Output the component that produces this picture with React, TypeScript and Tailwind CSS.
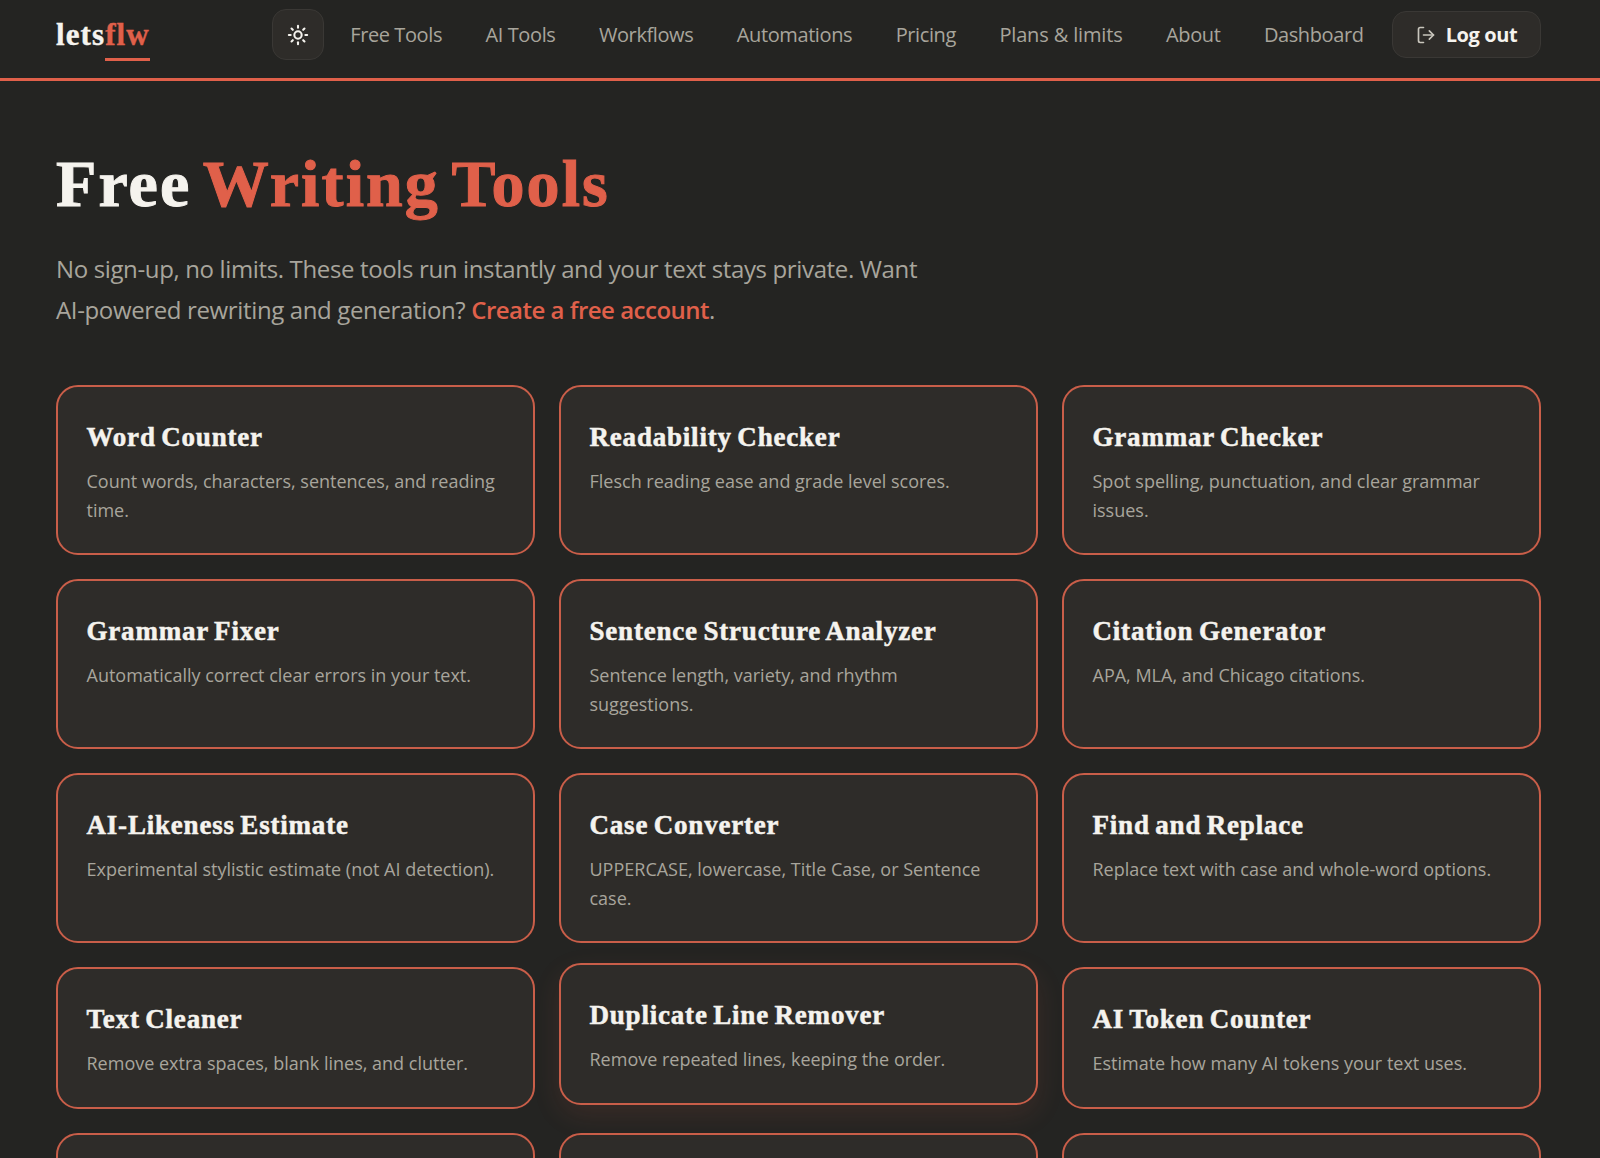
import { LogOut, Sun } from "lucide-react";

const NAV_LINKS = ["Free Tools", "AI Tools", "Workflows", "Automations", "Pricing", "Plans & limits", "About", "Dashboard"];

const TOOLS = [
  { title: "Word Counter", desc: "Count words, characters, sentences, and reading time." },
  { title: "Readability Checker", desc: "Flesch reading ease and grade level scores." },
  { title: "Grammar Checker", desc: "Spot spelling, punctuation, and clear grammar issues." },
  { title: "Grammar Fixer", desc: "Automatically correct clear errors in your text." },
  { title: "Sentence Structure Analyzer", desc: "Sentence length, variety, and rhythm suggestions." },
  { title: "Citation Generator", desc: "APA, MLA, and Chicago citations." },
  { title: "AI-Likeness Estimate", desc: "Experimental stylistic estimate (not AI detection)." },
  { title: "Case Converter", desc: "UPPERCASE, lowercase, Title Case, or Sentence case." },
  { title: "Find and Replace", desc: "Replace text with case and whole-word options." },
  { title: "Text Cleaner", desc: "Remove extra spaces, blank lines, and clutter." },
  { title: "Duplicate Line Remover", desc: "Remove repeated lines, keeping the order.", hovered: true },
  { title: "AI Token Counter", desc: "Estimate how many AI tokens your text uses." },
];

function ToolCard({ title, desc, hovered }: { title: string; desc: string; hovered?: boolean }) {
  return (
    <div
      className={`rounded-[22px] border-2 border-[#c95e49] bg-[#2e2c29] pt-[34px] pr-[35px] pb-[28.5px] pl-[28.5px] ${
        hovered ? "-translate-y-1 shadow-[0_10px_28px_rgba(224,96,74,0.12)]" : ""
      }`}
    >
      <h3 className="font-['Liberation_Serif',serif] text-[27px] leading-[32px] font-bold tracking-[0.8px] text-[#f5f3ee] [word-spacing:-2px] [-webkit-text-stroke:0.5px]">{title}</h3>
      <p className="mt-[14.5px] text-[18px] leading-[28.56px] text-[#a8a59c]">{desc}</p>
    </div>
  );
}

export default function App() {
  return (
    <div className="h-screen overflow-hidden bg-[#242422] font-['Open_Sans',sans-serif]">
      <header className="flex h-[81px] items-center justify-between border-b-[3px] border-[#e0604a] pr-[59px] pb-[9px] pl-[56px]">
        <div className="flex items-center">
          <div className="relative font-['Liberation_Serif',serif] text-[31px] leading-none font-bold tracking-[1.1px] text-[#f5f3ee] [-webkit-text-stroke:0.4px]">
            lets<span className="text-[#e0604a]">flw</span>
            <span className="absolute right-0 -bottom-[11px] h-[3px] w-[45px] bg-[#e0604a]" />
          </div>
          <button className="ml-[122px] flex h-[51px] w-[52px] items-center justify-center rounded-[14px] border border-[#3a3835] bg-[#2e2c29] text-[#f5f3ee]">
            <Sun size={22} strokeWidth={2.25} />
          </button>
        </div>
        <nav className="flex items-center gap-[43.5px] text-[20px] tracking-[-0.4px] text-[#a8a59c]">
          {NAV_LINKS.map((link) => (
            <a key={link} className={link === "Plans & limits" ? "tracking-[-0.15px]" : ""}>
              {link}
            </a>
          ))}
          <button className="-ml-[15px] flex h-[47px] w-[149px] items-center justify-center gap-[10px] rounded-[14px] border border-[#3a3835] bg-[#2e2c29] font-bold text-[#f5f3ee]">
            <LogOut size={20} className="text-[#c9c6bd]" />
            Log out
          </button>
        </nav>
      </header>

      <main className="pt-[65px] pr-[59px] pl-[56px]">
        <h1 className="font-['Liberation_Serif',serif] text-[66px] leading-[76px] font-bold tracking-[2.1px] text-[#f5f3ee] [word-spacing:-6px] [-webkit-text-stroke:1px]">
          Free <span className="text-[#e0604a]">Writing Tools</span>
        </h1>
        <p className="mt-[27px] max-w-[880px] text-[24px] leading-[40.8px] tracking-[-0.36px] text-[#a8a59c]">
          No sign-up, no limits. These tools run instantly and your text stays private. Want AI-powered rewriting and generation?{" "}
          <a className="font-semibold tracking-[-0.5px] text-[#e0604a]">Create a free account</a>.
        </p>
        <div className="mt-[54px] grid grid-cols-3 gap-[24px]">
          {TOOLS.map((tool) => (
            <ToolCard key={tool.title} {...tool} />
          ))}
          <div className="h-[141px] rounded-[22px] border-2 border-[#c95e49] bg-[#2e2c29]" />
          <div className="h-[141px] rounded-[22px] border-2 border-[#c95e49] bg-[#2e2c29]" />
          <div className="h-[141px] rounded-[22px] border-2 border-[#c95e49] bg-[#2e2c29]" />
        </div>
      </main>
    </div>
  );
}
